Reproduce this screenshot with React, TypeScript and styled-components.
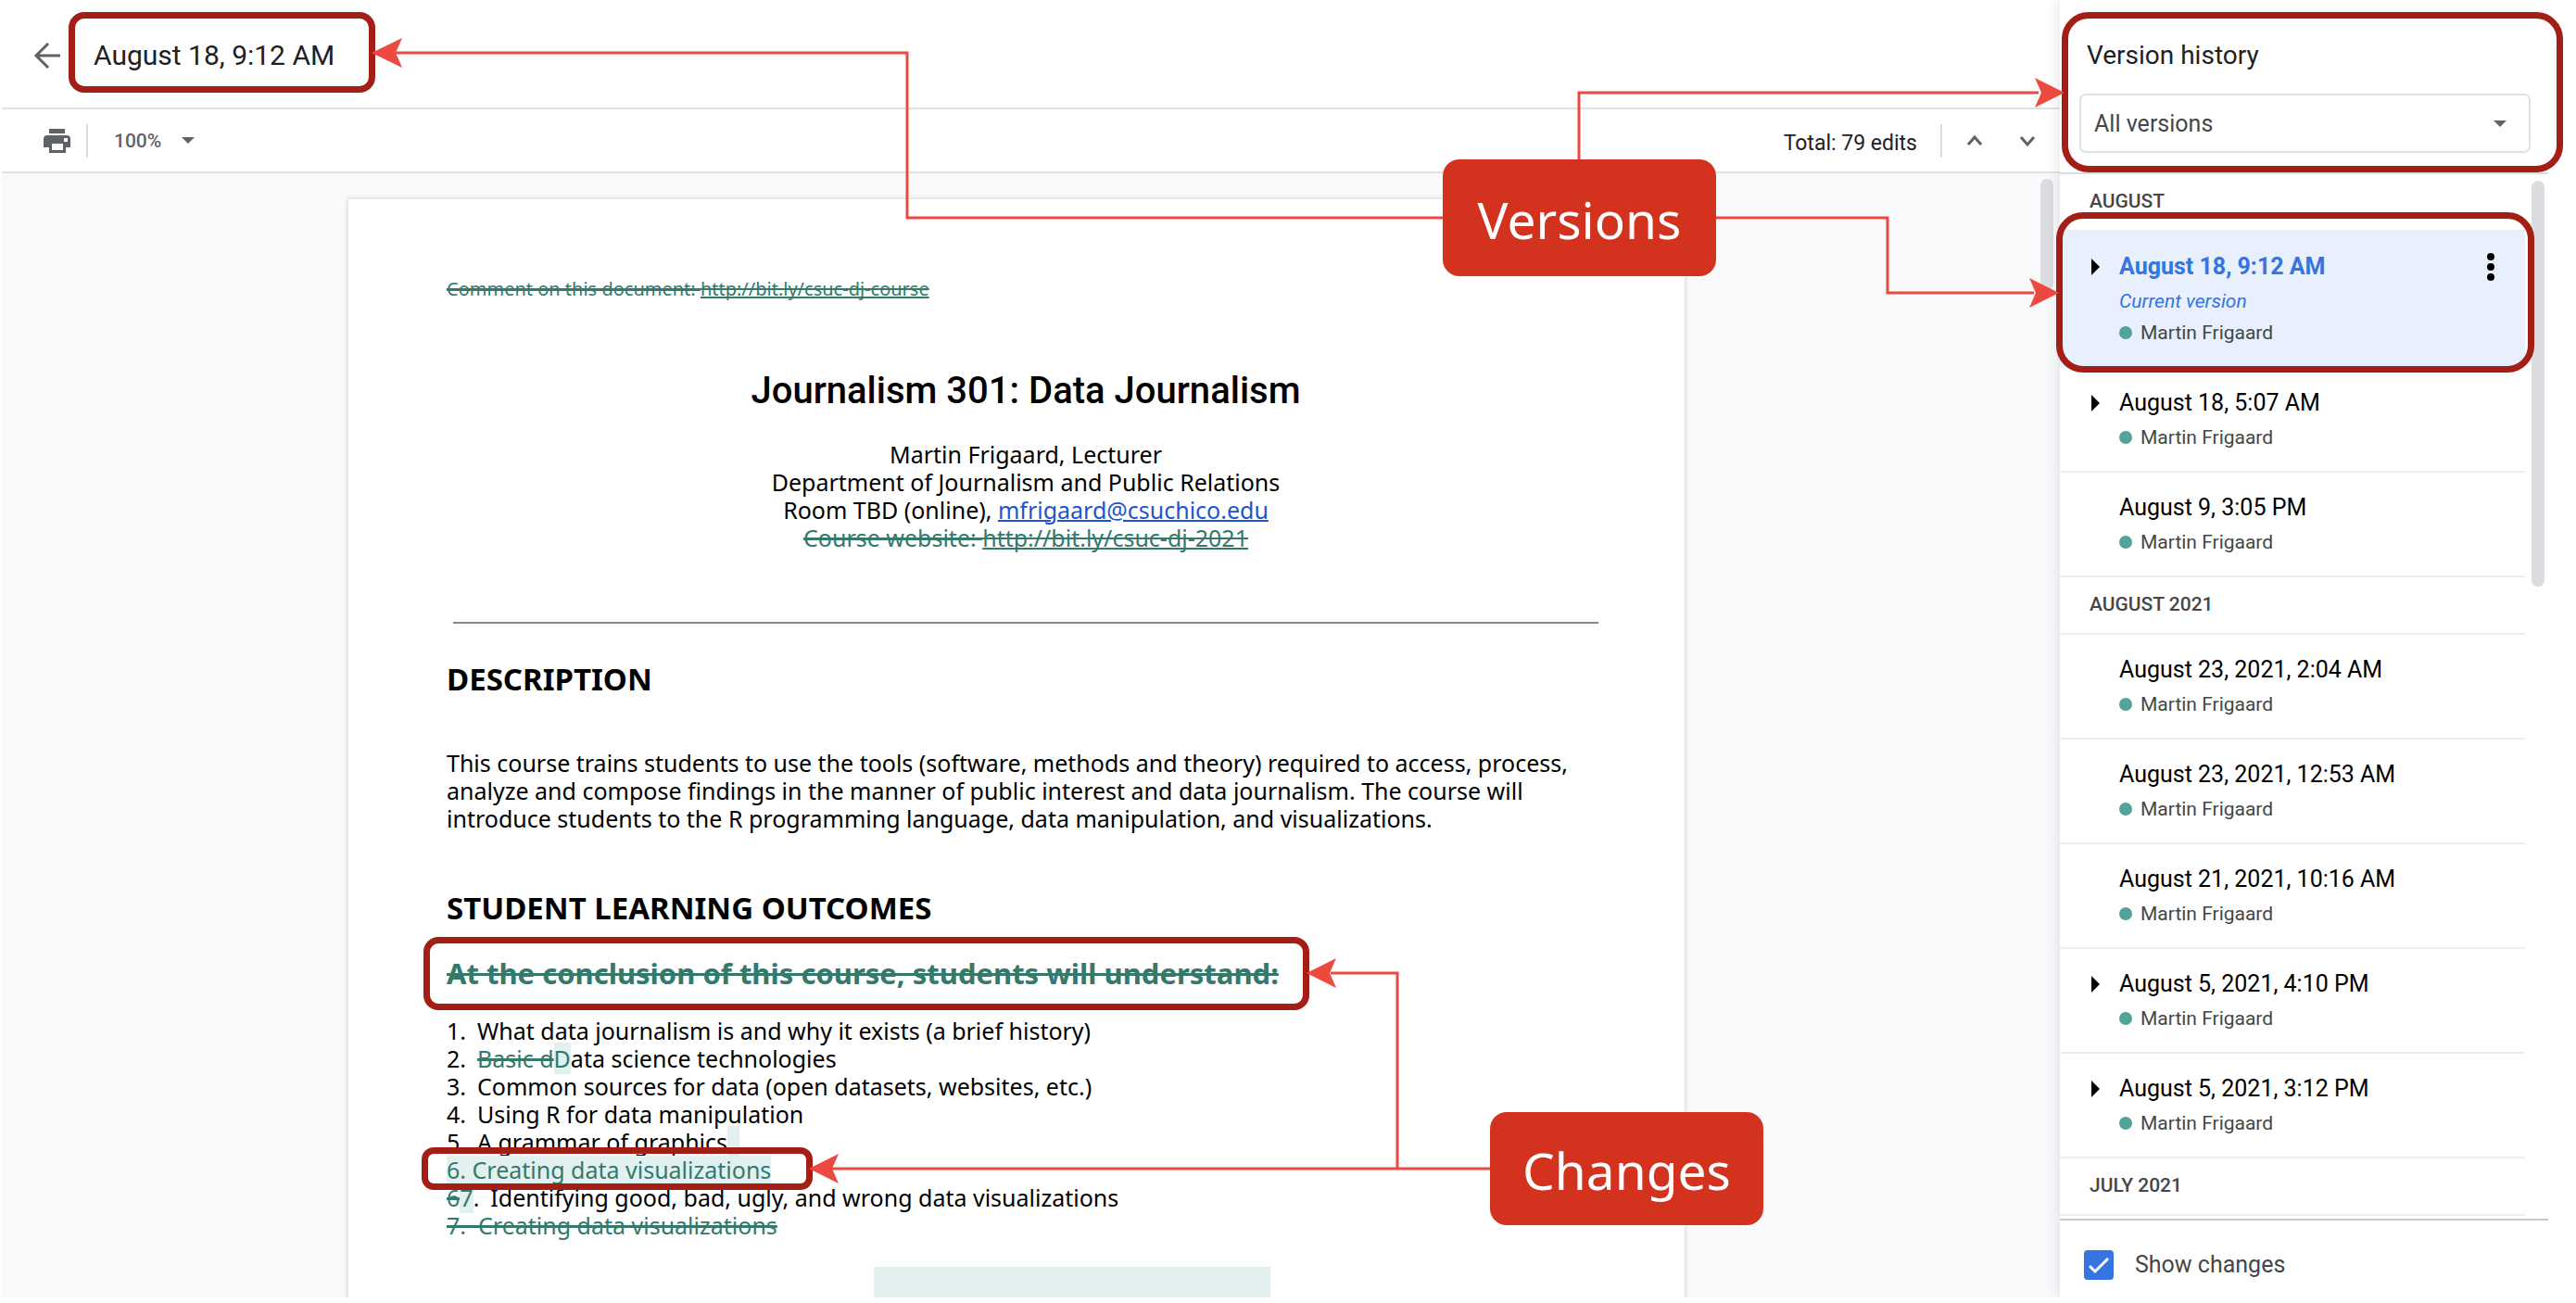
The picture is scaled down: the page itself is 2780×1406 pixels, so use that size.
import React from "react";
import styled, { createGlobalStyle, css } from "styled-components";

const ui = `Roboto, "Liberation Sans", sans-serif`;
const doc = `"Noto Sans", "Open Sans", sans-serif`;

const GlobalStyle = createGlobalStyle`
  * { box-sizing: border-box; }
  html, body { margin: 0; background: #fff; }
  button { border: 0; padding: 0; margin: 0; background: none; color: inherit; font: inherit; cursor: pointer; }
  h1, h2, h3, p, ol, ul { margin: 0; padding: 0; font-weight: inherit; }
  ol, ul { list-style: none; }
  svg { display: block; }
`;

const Screen = styled.div`
  position: relative;
  display: grid;
  grid-template-columns: minmax(0, 1fr) 557px;
  height: 100vh;
  padding: 0 0 6px 2px;
  overflow: hidden;
  font-family: ${ui};
  color: #202124;
`;

const Main = styled.main`
  display: flex;
  flex-direction: column;
  min-width: 0;
  min-height: 0;
`;

const Header = styled.header`
  display: flex;
  align-items: center;
  gap: 35px;
  height: 118px;
  padding: 4px 0 0 34px;
  border-bottom: 2px solid #dfe1e5;
`;

const Title = styled.h1`
  font-size: 30px;
  line-height: 40px;
`;

const IconButton = styled.button`
  display: grid;
  place-items: center;
  flex: none;
`;

const Toolbar = styled.div`
  display: flex;
  align-items: center;
  height: 69px;
  padding: 0 23px 0 45px;
  border-bottom: 2px solid #dfe1e5;
`;

const Divider = styled.span<{ $before: number; $after: number }>`
  width: 2px;
  height: 36px;
  margin: 0 ${(p) => p.$after}px 0 ${(p) => p.$before}px;
  background: #dadce0;
`;

const Zoom = styled.button`
  display: flex;
  align-items: center;
  gap: 22px;
  font-size: 21px;
  line-height: 28px;
  font-weight: 500;
  color: #5f6368;
`;

const Edits = styled.span`
  margin-left: auto;
  padding-top: 6px;
  font-size: 23px;
  line-height: 28px;
`;

const Chevrons = styled.div`
  display: flex;
  gap: 33px;
`;

const Canvas = styled.div`
  position: relative;
  display: flex;
  flex: 1;
  align-items: flex-start;
  justify-content: center;
  min-height: 0;
  padding: 28px 405px 0 374px;
  overflow: hidden;
  background: #f8f9fb;
`;

const Thumb = styled.div<{ $length: number; $right: number; $top: number }>`
  position: absolute;
  top: ${(p) => p.$top}px;
  right: ${(p) => p.$right}px;
  width: 14px;
  height: ${(p) => p.$length}px;
  border-radius: 7px;
  background: #dadce0;
`;

const Page = styled.article`
  width: 100%;
  min-height: 1300px;
  padding: 85px 86px 60px 106px;
  background: #fff;
  box-shadow: 0 0 4px 1px rgba(60, 64, 67, 0.18);
  font-family: ${doc};
  font-size: 25px;
  line-height: 30px;
  color: #000;
  white-space: nowrap;
`;

const changed = css`
  color: #34796b;
`;

const Del = styled.del`
  ${changed}
  text-decoration: line-through;
  text-decoration-thickness: 3px;
`;

const Ins = styled.ins`
  ${changed}
  background: #e2f0ef;
  text-decoration: none;
`;

const GreenLink = styled.a`
  ${changed}
  text-decoration: underline line-through;
  text-decoration-thickness: 2px;
  text-decoration-skip-ink: none;
`;

const BlueLink = styled.a`
  color: #1f55cc;
  text-decoration-thickness: 2px;
`;

const Comment = styled.p`
  font-size: 20px;
  line-height: 24px;
`;

const DocTitle = styled.h2`
  margin: 72px 0 27px;
  font-family: ${ui};
  font-size: 40px;
  line-height: 52px;
  font-weight: 500;
  text-align: center;
`;

const Address = styled.p`
  text-align: center;
`;

const Rule = styled.hr`
  height: 2px;
  margin: 76px 7px 40px;
  border: 0;
  background: #888;
`;

const Heading = styled.h3`
  font-size: 33px;
  line-height: 40px;
  font-weight: 700;
`;

const Paragraph = styled.p`
  margin: 55px 0 62px;
`;

const Lead = styled.p`
  margin: 30px 0 27px;
  font-size: 31px;
  line-height: 40px;
  font-weight: 700;
`;

const Outcome = styled.li`
  display: flex;
  gap: 12px;
  height: 30px;
`;

const AddedBlock = styled.div`
  width: 428px;
  height: 120px;
  margin: 30px 0 0 461px;
  background: #e2f0ef;
`;

const Sidebar = styled.aside`
  position: relative;
  display: flex;
  flex-direction: column;
  min-height: 0;
  background: #fff;
  box-shadow: 0 0 14px rgba(60, 64, 67, 0.16);
  clip-path: inset(0 0 0 -16px);
`;

const SideHead = styled.div`
  height: 188px;
  margin-right: 30px;
  padding: 42px 19px 0 21px;
  border-bottom: 2px solid #dadce0;
`;

const SideTitle = styled.h2`
  padding-left: 8px;
  font-size: 28px;
  line-height: 36px;
`;

const SelectBox = styled.div`
  position: relative;
  margin-top: 23px;
  svg { position: absolute; right: 26px; top: 29px; pointer-events: none; }
`;

const Select = styled.select`
  width: 100%;
  height: 64px;
  padding: 0 14px;
  appearance: none;
  border: 2px solid #dfe1e5;
  border-radius: 7px;
  background: #fff;
  font-family: ${ui};
  font-size: 25px;
  color: #444746;
`;

const List = styled.div`
  flex: 1;
  min-height: 0;
  margin-right: 55px;
  overflow: hidden;
`;

const Month = styled.h3`
  height: 62px;
  padding: 15px 0 0 32px;
  border-bottom: 2px solid #ebedef;
  font-size: 21px;
  line-height: 28px;
  font-weight: 500;
  color: #444746;
`;

const Version = styled.li<{ $current?: boolean }>`
  display: grid;
  grid-template-columns: 32px 1fr 24px;
  padding: 22px 25px 23px 32px;
  border-bottom: 2px solid ${(p) => (p.$current ? "#e8effd" : "#ebedef")};
  background: ${(p) => (p.$current ? "#e8effd" : "#fff")};
`;

const Expand = styled.button`
  display: flex;
  align-items: center;
  height: 32px;
  padding-left: 2px;
`;

const VersionInfo = styled.div`
  display: grid;
  gap: 8px;
  font-size: 21px;
  line-height: 26px;
  color: #444746;
`;

const VersionName = styled.span<{ $current?: boolean }>`
  font-size: 25px;
  line-height: 32px;
  color: ${(p) => (p.$current ? "#3574e2" : "#000")};
  font-weight: ${(p) => (p.$current ? 700 : 400)};
`;

const CurrentTag = styled.em`
  color: #3574e2;
`;

const Author = styled.span`
  display: flex;
  align-items: center;
  gap: 9px;
  &::before {
    content: "";
    width: 14px;
    height: 14px;
    border-radius: 50%;
    background: #53a498;
  }
`;

const Kebab = styled.button`
  display: grid;
  place-items: center;
  height: 32px;
`;

const SideFoot = styled.div`
  height: 85px;
  margin-right: 30px;
  padding: 32px 0 0 26px;
  border-top: 2px solid #c6c7ca;
`;

const CheckLabel = styled.label`
  position: relative;
  display: flex;
  align-items: center;
  gap: 23px;
  font-size: 25px;
  line-height: 32px;
  color: #444746;
  svg { position: absolute; left: 5px; top: 6px; pointer-events: none; }
`;

const Checkbox = styled.input`
  width: 32px;
  height: 32px;
  margin: 0;
  appearance: none;
  border-radius: 4px;
  background: #3574e2;
`;

const Overlay = styled.div`
  position: absolute;
  inset: 0;
  pointer-events: none;
`;

const Arrows = styled.svg`
  position: absolute;
  inset: 0;
  width: 100%;
  height: 100%;
`;

type Box = { $x: number; $y: number; $w: number; $h: number };

const Frame = styled.div<Box & { $radius: number }>`
  position: absolute;
  left: ${(p) => p.$x}px;
  top: ${(p) => p.$y}px;
  width: ${(p) => p.$w}px;
  height: ${(p) => p.$h}px;
  border: 7px solid #a31f15;
  border-radius: ${(p) => p.$radius}px;
`;

const Callout = styled.div<Box>`
  position: absolute;
  left: ${(p) => p.$x}px;
  top: ${(p) => p.$y}px;
  display: grid;
  place-items: center;
  width: ${(p) => p.$w}px;
  height: ${(p) => p.$h}px;
  padding-top: 4px;
  border-radius: 18px;
  background: #d3321f;
  color: #fff;
  font-family: ${doc};
  font-size: 55px;
  line-height: 72px;
`;

const CaretDown = ({ w = 14 }: { w?: number }) => (
  <svg width={w} height="7" viewBox="0 0 14 7"><path d="M0 0h14L7 7z" fill="#5f6368" /></svg>
);

type Entry = { name: string; expandable?: boolean; current?: boolean };
const months: { label: string; entries: Entry[] }[] = [
  {
    label: "AUGUST",
    entries: [
      { name: "August 18, 9:12 AM", expandable: true, current: true },
      { name: "August 18, 5:07 AM", expandable: true },
      { name: "August 9, 3:05 PM" },
    ],
  },
  {
    label: "AUGUST 2021",
    entries: [
      { name: "August 23, 2021, 2:04 AM" },
      { name: "August 23, 2021, 12:53 AM" },
      { name: "August 21, 2021, 10:16 AM" },
      { name: "August 5, 2021, 4:10 PM", expandable: true },
      { name: "August 5, 2021, 3:12 PM", expandable: true },
    ],
  },
  { label: "JULY 2021", entries: [] },
];

function VersionRow({ name, expandable, current }: Entry) {
  return (
    <Version $current={current}>
      {expandable ? (
        <Expand aria-label="Expand version">
          <svg width="9" height="18" viewBox="0 0 9 18"><path d="M0 0l9 9-9 9z" /></svg>
        </Expand>
      ) : (
        <span />
      )}
      <VersionInfo>
        <VersionName $current={current}>{name}</VersionName>
        {current && <CurrentTag>Current version</CurrentTag>}
        <Author>Martin Frigaard</Author>
      </VersionInfo>
      {current && (
        <Kebab aria-label="More actions">
          <svg width="8" height="30" viewBox="0 0 8 30">
            <circle cx="4" cy="4" r="4" /><circle cx="4" cy="15" r="4" /><circle cx="4" cy="26" r="4" />
          </svg>
        </Kebab>
      )}
    </Version>
  );
}

function Annotations() {
  return (
    <Overlay>
      <Frame $x={74} $y={13} $w={331} $h={87} $radius={17} />
      <Frame $x={2225} $y={13} $w={541} $h={173} $radius={29} />
      <Frame $x={2219} $y={229} $w={516} $h={173} $radius={29} />
      <Frame $x={457} $y={1011} $w={956} $h={79} $radius={16} />
      <Frame $x={455} $y={1238} $w={422} $h={46} $radius={13} />
      <Arrows fill="none" stroke="#ec4a41" strokeWidth="3">
        <path d="M1557 235H979V57H425" />
        <path d="M1704 172V100H2200" />
        <path d="M1852 235H2037V316H2195" />
        <path d="M1608 1261H898" />
        <path d="M1508 1261V1050H1436" />
        <g fill="#ec4a41" stroke="none">
          <path d="M401 57l33-16-7 16 7 16z" />
          <path d="M2228 100l-32-16 7 16-7 16z" />
          <path d="M2222 316l-32-16 7 16-7 16z" />
          <path d="M873 1261l32-16-7 16 7 16z" />
          <path d="M1410 1050l32-16-7 16 7 16z" />
        </g>
      </Arrows>
      <Callout $x={1557} $y={172} $w={295} $h={126}>Versions</Callout>
      <Callout $x={1608} $y={1200} $w={295} $h={122}>Changes</Callout>
    </Overlay>
  );
}

export default function App() {
  return (
    <>
      <GlobalStyle />
      <Screen>
        <Main>
          <Header>
            <IconButton aria-label="Back">
              <svg width="30" height="30" viewBox="0 0 30 30" fill="none" stroke="#5f6368" strokeWidth="3">
                <path d="M29 15H3M16 2L3 15l13 13" />
              </svg>
            </IconButton>
            <Title>August 18, 9:12 AM</Title>
          </Header>
          <Toolbar>
            <IconButton aria-label="Print">
              <svg width="29" height="26" viewBox="0 0 29 26" fill="#5f6368" fillRule="evenodd">
                <path d="M6 0h17v5H6zM4 7h21a4 4 0 0 1 4 4v9h-5v6H6v-6H0v-9a4 4 0 0 1 4-4zM9 16v7h12v-7zM22 10v4h4v-4z" />
              </svg>
            </IconButton>
            <Divider $before={17} $after={28} />
            <Zoom>100% <CaretDown /></Zoom>
            <Edits>Total: 79 edits</Edits>
            <Divider $before={25} $after={23} />
            <Chevrons>
              <IconButton aria-label="Previous edit">
                <svg width="24" height="24" viewBox="0 0 24 24" fill="none" stroke="#5f6368" strokeWidth="3"><path d="M5 16l7-8 7 8" /></svg>
              </IconButton>
              <IconButton aria-label="Next edit">
                <svg width="24" height="24" viewBox="0 0 24 24" fill="none" stroke="#5f6368" strokeWidth="3"><path d="M5 8l7 8 7-8" /></svg>
              </IconButton>
            </Chevrons>
          </Toolbar>
          <Canvas>
            <Page>
              <Comment>
                <Del>Comment on this document: </Del>
                <GreenLink href="#course">http://bit.ly/csuc-dj-course</GreenLink>
              </Comment>
              <DocTitle>Journalism 301: Data Journalism</DocTitle>
              <Address>
                Martin Frigaard, Lecturer<br />
                Department of Journalism and Public Relations<br />
                Room TBD (online), <BlueLink href="#mail">mfrigaard@csuchico.edu</BlueLink><br />
                <Del>Course website: </Del><GreenLink href="#site">http://bit.ly/csuc-dj-2021</GreenLink>
              </Address>
              <Rule />
              <Heading>DESCRIPTION</Heading>
              <Paragraph>
                This course trains students to use the tools (software, methods and theory) required to access, process,<br />
                analyze and compose findings in the manner of public interest and data journalism. The course will<br />
                introduce students to the R programming language, data manipulation, and visualizations.
              </Paragraph>
              <Heading>STUDENT LEARNING OUTCOMES</Heading>
              <Lead><Del>At the conclusion of this course, students will understand:</Del></Lead>
              <ol>
                <Outcome><span>1.</span><span>What data journalism is and why it exists (a brief history)</span></Outcome>
                <Outcome><span>2.</span><span><Del>Basic d</Del><Ins>D</Ins>ata science technologies</span></Outcome>
                <Outcome><span>3.</span><span>Common sources for data (open datasets, websites, etc.)</span></Outcome>
                <Outcome><span>4.</span><span>Using R for data manipulation</span></Outcome>
                <Outcome><span>5.</span><span>A grammar of graphics<Ins>&nbsp;&nbsp;</Ins></span></Outcome>
                <Outcome><Ins>6. Creating data visualizations</Ins></Outcome>
                <Outcome><span><Del>6</Del><Ins>7</Ins>.</span><span>Identifying good, bad, ugly, and wrong data visualizations</span></Outcome>
                <Outcome><Del>7.&nbsp; Creating data visualizations</Del></Outcome>
              </ol>
              <AddedBlock />
            </Page>
            <Thumb $top={6} $right={7} $length={120} />
          </Canvas>
        </Main>
        <Sidebar>
          <SideHead>
            <SideTitle>Version history</SideTitle>
            <SelectBox>
              <Select aria-label="Filter versions" defaultValue="all">
                <option value="all">All versions</option>
              </Select>
              <CaretDown />
            </SelectBox>
          </SideHead>
          <List>
            {months.map((month) => (
              <section key={month.label}>
                <Month>{month.label}</Month>
                <ul>{month.entries.map((e) => <VersionRow key={e.name} {...e} />)}</ul>
              </section>
            ))}
          </List>
          <Thumb $top={195} $right={34} $length={438} />
          <SideFoot>
            <CheckLabel>
              <Checkbox type="checkbox" defaultChecked />
              Show changes
              <svg width="22" height="20" viewBox="0 0 22 20" fill="none" stroke="#fff" strokeWidth="3"><path d="M1 11l6 6L21 3" /></svg>
            </CheckLabel>
          </SideFoot>
        </Sidebar>
        <Annotations />
      </Screen>
    </>
  );
}
